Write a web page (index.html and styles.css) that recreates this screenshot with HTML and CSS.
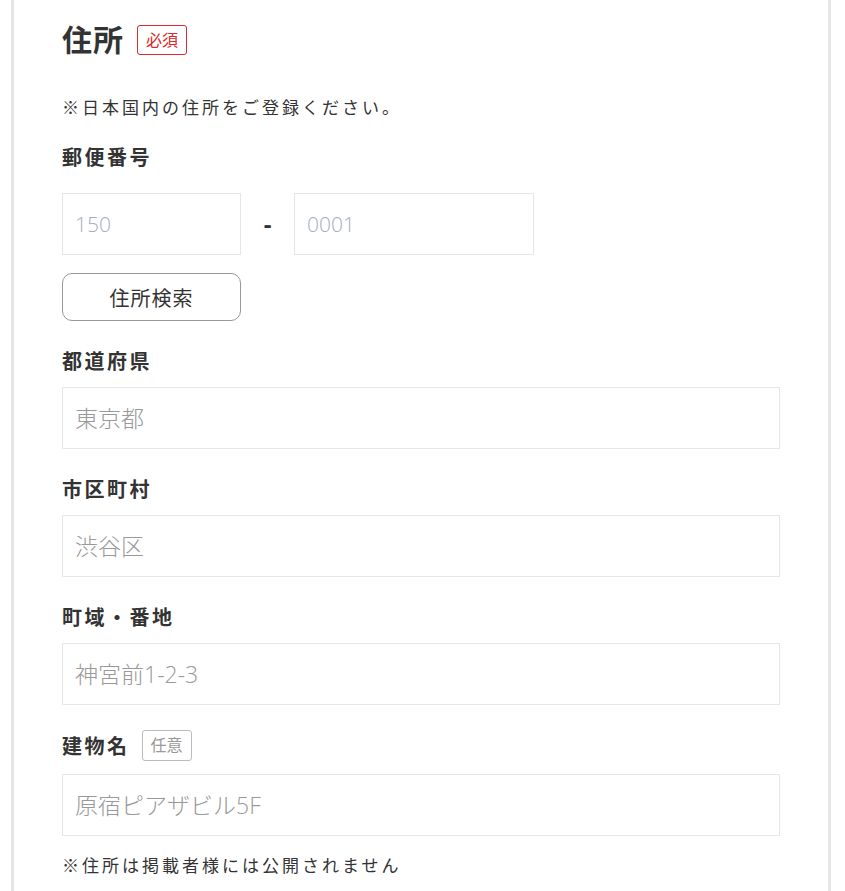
FILE: index.html
```html
<!DOCTYPE html>
<html lang="ja">
<head>
<meta charset="utf-8">
<link rel="stylesheet" href="styles.css">
</head>
<body>
<div class="panel">
  <div class="title-row">
    <h2 class="title">住所</h2>
    <span class="badge badge-required">必須</span>
  </div>
  <p class="note note-top">※日本国内の住所をご登録ください。</p>

  <div class="field field-first">
    <div class="label-row"><span class="label">郵便番号</span></div>
    <div class="zip-row">
      <input class="input zip1" type="text" placeholder="150">
      <span class="dash">-</span>
      <input class="input zip2" type="text" placeholder="0001">
    </div>
    <button class="search-btn" type="button">住所検索</button>
  </div>

  <div class="field">
    <div class="label-row"><span class="label">都道府県</span></div>
    <input class="input full" type="text" placeholder="東京都">
  </div>

  <div class="field">
    <div class="label-row"><span class="label">市区町村</span></div>
    <input class="input full" type="text" placeholder="渋谷区">
  </div>

  <div class="field">
    <div class="label-row"><span class="label">町域・番地</span></div>
    <input class="input full" type="text" placeholder="神宮前1-2-3">
  </div>

  <div class="field field-last">
    <div class="label-row"><span class="label">建物名</span><span class="badge badge-optional">任意</span></div>
    <input class="input full" type="text" placeholder="原宿ピアザビル5F">
  </div>

  <p class="note note-bottom">※住所は掲載者様には公開されません</p>
</div>
</body>
</html>
```

FILE: styles.css
```css
html, body {
  margin: 0;
  padding: 0;
  background: #fff;
}
body {
  font-family: "Open Sans", "Noto Sans CJK JP", sans-serif;
  color: #333;
}
.panel {
  margin: 0 14px 0 11px;
  border-left: 3px solid #e6e6e6;
  border-right: 3px solid #e6e6e6;
  padding: 20px 48px 20px 48px;
  min-height: 891px;
  box-sizing: border-box;
}
.title-row {
  display: flex;
  align-items: center;
  gap: 13px;
}
.title {
  margin: 0;
  font-size: 30px;
  font-weight: 700;
  letter-spacing: 1px;
  line-height: 40px;
  color: #333;
}
.badge {
  display: inline-block;
  box-sizing: border-box;
  font-size: 16px;
  height: 31px;
  line-height: 29px;
  width: 50px;
  text-align: center;
  border-radius: 3px;
}
.badge-required {
  color: #d92b2b;
  border: 1px solid #d92b2b;
  height: 30px;
  line-height: 28px;
}
.badge-optional {
  color: #999;
  border: 1px solid #bbb;
  margin-left: 12px;
}
.note {
  margin: 0;
  font-size: 17px;
  letter-spacing: 3px;
  line-height: 24px;
  color: #333;
}
.note-top {
  margin-top: 36px;
}
.field {
  margin-top: 22px;
}
.field-first {
  margin-top: 19px;
}
.label-row {
  display: flex;
  align-items: center;
  height: 34px;
}
.field-last .label-row {
  height: 36px;
}
.label {
  font-size: 20px;
  font-weight: 700;
  letter-spacing: 2.5px;
  color: #333;
}
.input {
  display: block;
  box-sizing: border-box;
  height: 62px;
  border: 1px solid #e6e6e6;
  padding: 0 12px;
  font-family: "Open Sans", "Noto Sans CJK JP", sans-serif;
  font-size: 23px;
  color: #333;
  background: #fff;
  outline: none;
  border-radius: 0;
}
.input::placeholder {
  color: #999;
  font-weight: 300;
}
.zip-row .input {
  font-size: 21px;
}
.zip-row .input::placeholder {
  color: #a2adbf;
}
.field > .input {
  margin-top: 10px;
}
.field-last > .input {
  margin-top: 11px;
}
.full {
  width: 100%;
}
.zip-row {
  display: flex;
  align-items: center;
  margin-top: 20px;
}
.zip1 {
  width: 179px;
}
.zip2 {
  width: 240px;
}
.dash {
  width: 53px;
  text-align: center;
  font-size: 24px;
  font-weight: 700;
  color: #333;
  line-height: 1;
}
.search-btn {
  display: block;
  margin-top: 18px;
  width: 179px;
  height: 48px;
  border: 1px solid #999;
  border-radius: 10px;
  background: #fff;
  font-family: "Open Sans", "Noto Sans CJK JP", sans-serif;
  font-size: 20px;
  letter-spacing: 1px;
  color: #333;
  cursor: pointer;
}
.note-bottom {
  margin-top: 18px;
}
```
